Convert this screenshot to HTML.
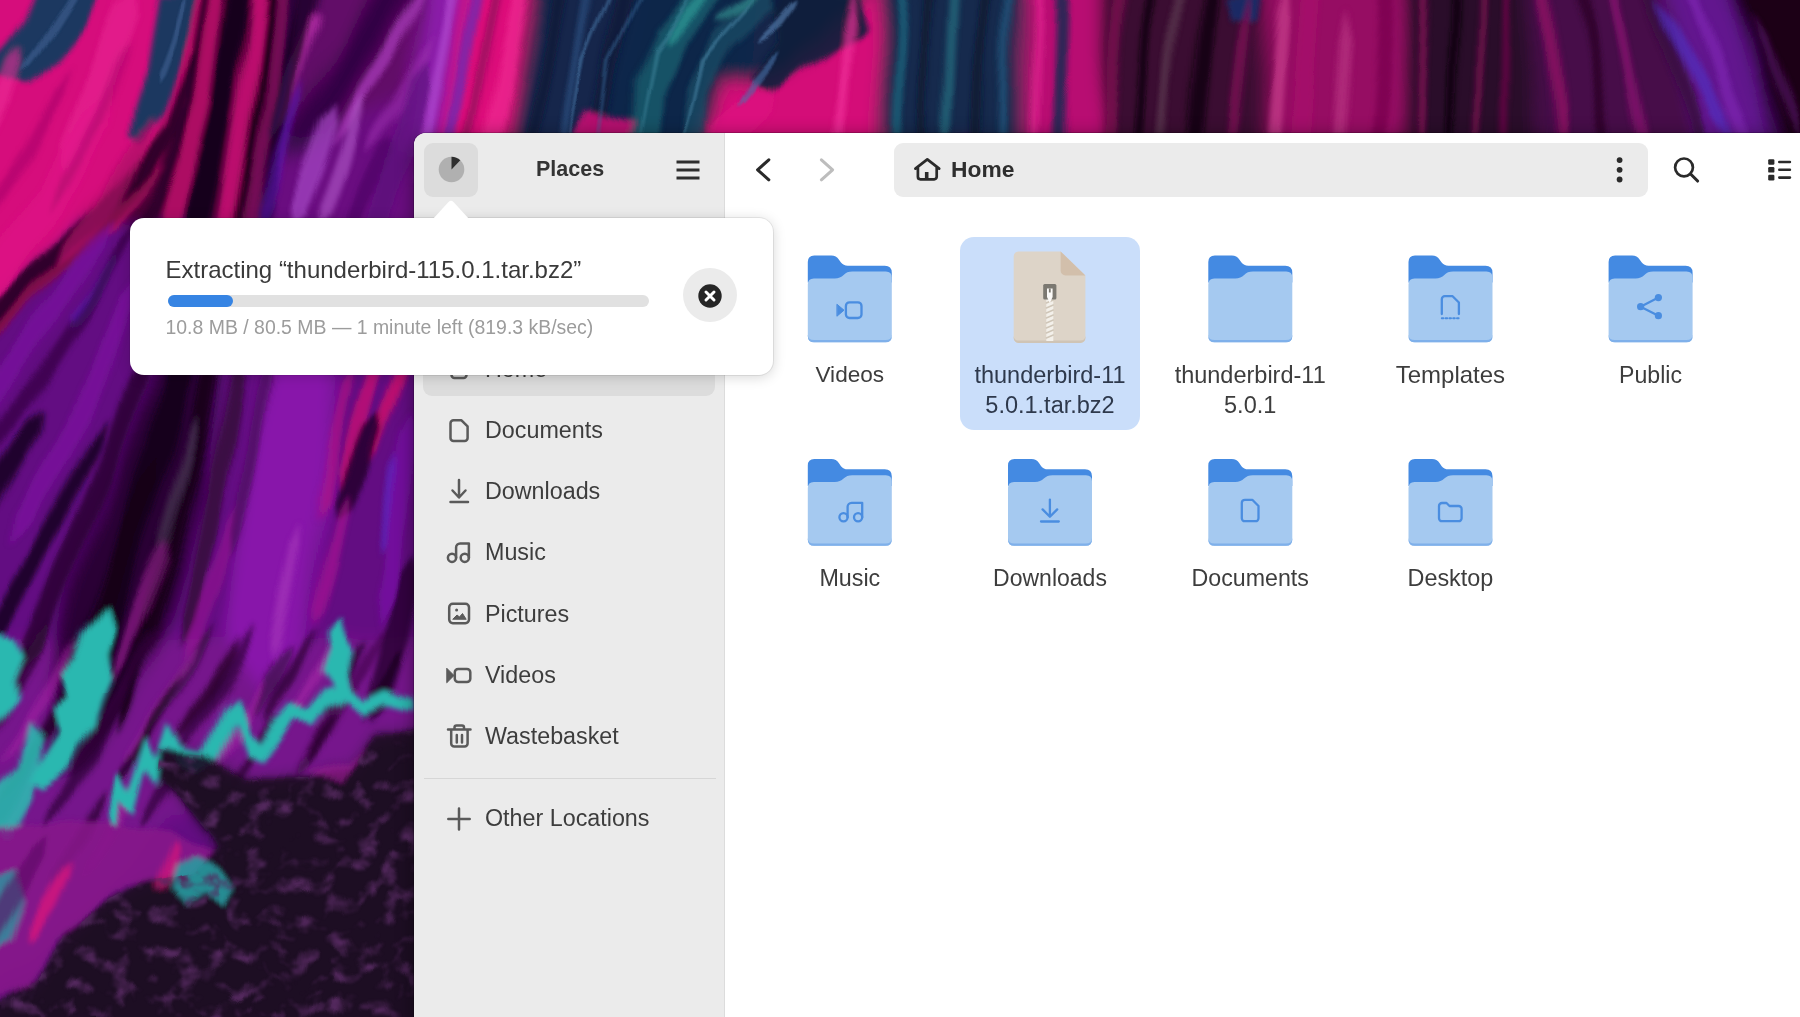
<!DOCTYPE html>
<html>
<head>
<meta charset="utf-8">
<title>Files</title>
<style>
html,body{margin:0;padding:0;}
body{width:1800px;height:1017px;overflow:hidden;position:relative;background:#5a0f6e;font-family:"Liberation Sans",sans-serif;color:#3a3a3a;}
.abs{position:absolute;}
#wall{position:absolute;left:0;top:0;width:1800px;height:1017px;}
#win{position:absolute;left:414px;top:133px;width:1400px;height:900px;border-top-left-radius:12px;overflow:hidden;background:#fff;box-shadow:0 0 0 1px rgba(0,0,0,.18),0 3px 18px rgba(0,0,0,.45);}
#side{position:absolute;left:0;top:0;width:310px;height:900px;background:#ebebeb;border-right:1px solid #dcdcdc;}
.t{position:absolute;white-space:nowrap;line-height:1;}
.sb{font-size:23.3px;color:#3d3d3d;left:71px;margin-top:1px;}
.ic{position:absolute;}
.lbl{position:absolute;margin-top:0.5px;width:200px;text-align:center;font-size:23px;line-height:30.7px;color:#3d3d3d;}
.folder{position:absolute;width:86px;height:88px;}
</style>
</head>
<body>
<!--WALL-->
<svg id="wall" width="1800" height="1017" viewBox="0 0 1800 1017">
<defs><filter id="b1" x="-5%" y="-5%" width="110%" height="110%"><feGaussianBlur stdDeviation="8"/></filter><filter id="b2" x="-5%" y="-5%" width="110%" height="110%"><feGaussianBlur stdDeviation="2.4"/></filter><filter id="b3" x="-5%" y="-5%" width="110%" height="110%"><feGaussianBlur stdDeviation="1.2"/></filter>
<filter id="warp" x="0" y="0" width="100%" height="100%" color-interpolation-filters="sRGB"><feTurbulence type="fractalNoise" baseFrequency="0.016 0.006" numOctaves="2" seed="4" result="n"/><feDisplacementMap in="SourceGraphic" in2="n" scale="22" xChannelSelector="R" yChannelSelector="G"/><feGaussianBlur stdDeviation="0.7"/></filter>
<filter id="bumpf" x="0" y="0" width="100%" height="100%" color-interpolation-filters="sRGB"><feTurbulence type="fractalNoise" baseFrequency="0.045 0.055" numOctaves="3" seed="11" result="n"/><feColorMatrix in="n" type="matrix" values="0 0 0 0 0.33  0 0 0 0 0.16  0 0 0 0 0.37  3.4 0 0 0 -1.75"/><feGaussianBlur stdDeviation="0.9"/></filter>
<clipPath id="dk"><polygon points="425,732 379,732 351,767 303,781 241,781 207,756 165,750 162,781 193,812 220,846 193,874 138,887 103,908 69,929 34,977 -10,1008 -10,1030 425,1030"/></clipPath></defs>
<rect width="1800" height="1017" fill="#6c1088"/>
<g filter="url(#warp)"><g filter="url(#b1)"><polygon points="-30,-30 450,-30 450,1050 -30,1050" fill="#640e82"/>
<polygon points="-30,640 450,640 450,760 240,800 170,820 100,905 -30,1000" fill="#76128c"/>
<polygon points="-30,-30 200,-30 186,60 160,134 125,182 84,218 40,264 -30,330" fill="#d60c7c"/>
<polygon points="200,-30 292,-30 278,134 252,225 130,225 84,218 125,182 160,134 186,60" fill="#4a0636"/>
<polygon points="292,-30 450,-30 450,230 252,225 278,134" fill="#6a0e80"/>
<polygon points="292,-30 450,-30 450,60 380,110 300,140 278,134" fill="#620868"/>
<polygon points="417,-48 385,-29 337,50 287,132 282,168 313,148 367,70 415,-11" fill="#2c0640" opacity="0.85"/>
<polygon points="194,332 151,362 114,467 70,583 48,686 42,752 51,781 78,768 122,714 170,617 206,493 219,378" fill="#2a0634"/>
<polygon points="305,324 265,366 245,495 225,634 258,689 305,646 325,505 335,374" fill="#8814aa"/>
<polygon points="425,732 379,732 351,767 303,781 241,781 207,756 165,750 162,781 193,812 220,846 193,874 138,887 103,908 69,929 34,977 -10,1008 -10,1030 425,1030" fill="#1e0c22"/>
<polygon points="430,-30 470,-30 440,150 400,150" fill="#8a1ea8"/>
<polygon points="470,-30 535,-30 505,150 440,150" fill="#dc0c7a"/>
<polygon points="535,-30 640,-30 600,150 505,150" fill="#14264c"/>
<polygon points="640,-30 760,-30 740,150 600,150" fill="#10284a"/>
<polygon points="760,-30 890,-30 890,150 740,150" fill="#13284a"/>
<polygon points="720,85 790,75 830,35 885,-30 890,150 700,150" fill="#d40c78"/>
<polygon points="880,-30 1025,-30 1025,150 880,150" fill="#142c4e"/>
<polygon points="1025,-30 1100,-30 1100,150 1025,150" fill="#b80c72"/>
<polygon points="1100,-30 1265,-30 1265,150 1100,150" fill="#3a0a30"/>
<polygon points="1265,-30 1405,-30 1400,150 1265,150" fill="#960a64"/>
<polygon points="1405,-30 1530,-30 1540,150 1400,150" fill="#2c0a2a"/>
<polygon points="1530,-30 1660,-30 1700,150 1540,150" fill="#460a48"/>
<polygon points="1660,-30 1722,-30 1775,150 1700,150" fill="#62188e"/>
<polygon points="1722,-30 1830,-30 1830,150 1775,150" fill="#1a0418"/></g>
<g filter="url(#b2)"><polygon points="249,-62 235,-21 216,98 188,214 163,373 170,431 193,377 214,218 236,102 251,-19" fill="#14041a"/>
<polygon points="267,-62 255,-21 240,99 221,215 221,257 235,217 254,101 269,-19" fill="#c80c74" opacity="0.9"/>
<polygon points="280,-62 270,-21 254,99 235,215 234,257 245,217 262,101 278,-19" fill="#14041a" opacity="0.9"/>
<polygon points="290,-66 279,-21 264,109 243,215 243,253 257,217 276,111 291,-19" fill="#7a0a58" opacity="0.85"/>
<polygon points="301,-66 291,-21 276,109 255,215 255,253 269,217 288,111 301,-19" fill="#2a0636" opacity="0.9"/>
<polygon points="228,-62 215,-21 197,98 161,213 160,257 183,219 213,102 229,-19" fill="#b80a68" opacity="0.9"/>
<polygon points="218,-62 207,-21 188,99 152,198 135,227 134,240 145,233 164,202 196,101 215,-19" fill="#30042a" opacity="0.95"/>
<polygon points="210,-62 199,-21 177,99 134,187 107,221 102,237 117,229 146,193 187,101 207,-19" fill="#c00a6c" opacity="0.8"/>
<polygon points="205,36 192,59 164,127 119,183 83,217 36,263 -35,328 -50,361 -15,348 54,281 101,235 137,197 176,133 200,61" fill="#2c0428" opacity="0.95"/>
<polygon points="164,165 147,177 106,218 57,266 -3,324 -21,348 3,332 63,274 114,226 153,183" fill="#8a0850" opacity="0.9"/>
<polygon points="40,-8 102,-8 84,30 58,62 30,82 6,76 -8,66 12,44 28,22" fill="#1c3760"/>
<polygon points="156,-8 199,-8 191,35 178,70 160,116 136,145 126,138 131,110 144,70 150,30" fill="#1c3760"/>
<polygon points="134,-14 115,6 88,75 60,145 62,174 84,155 112,85 135,14" fill="#ee2c98" opacity="0.5"/>
<polygon points="23,46 12,58 -2,98 -14,128 -13,140 -2,132 12,102 24,62" fill="#ee2c98" opacity="0.6"/>
<polygon points="150,119 134,137 102,195 64,245 56,268 76,255 118,205 146,143" fill="#b00a68" opacity="0.7"/>
<polygon points="111,92 82,113 36,191 -24,270 -31,308 4,290 64,209 108,127" fill="#e2148a" opacity="0.5"/>
<polygon points="70,69 56,88 25,147 -15,207 -24,231 -5,213 35,153 64,92" fill="#a80a6a" opacity="0.6"/>
<polygon points="128,39 116,59 93,118 56,188 47,214 64,192 103,122 124,61" fill="#a80a6a" opacity="0.5"/>
<polygon points="318,11 308,25 290,68 275,118 274,138 285,122 302,72 316,27" fill="#c432b4" opacity="0.9"/>
<polygon points="294,58 287,69 276,104 269,134 269,146 275,136 284,106 293,71" fill="#7a2ce0" opacity="0.7"/>
<polygon points="430,-28 414,-7 379,57 341,119 331,144 349,125 391,63 422,-3" fill="#a43ab4" opacity="0.8"/>
<polygon points="434,32 421,48 395,97 368,137 362,154 376,143 405,103 429,52" fill="#9a2cac" opacity="0.6"/>
<polygon points="334,102 320,118 303,167 288,212 290,231 304,218 321,173 336,122" fill="#a648c6" opacity="0.7"/>
<polygon points="362,98 351,113 333,163 318,210 318,228 330,214 347,167 361,117" fill="#b45ccc" opacity="0.6"/>
<polygon points="304,79 294,99 275,159 257,213 256,234 267,217 285,161 302,101" fill="#5a14c4" opacity="0.5"/>
<polygon points="390,138 377,147 360,181 345,217 346,232 359,223 376,189 391,153" fill="#4a0a60" opacity="0.6"/>
<polygon points="318,-44 304,-22 287,48 269,128 269,158 283,132 305,52 320,-18" fill="#1c0424" opacity="0.8"/>
<polygon points="427,56 410,77 389,147 370,217 373,244 390,223 411,153 430,83" fill="#58107a" opacity="0.6"/>
<polygon points="118,252 108,260 91,287 72,315 69,328 80,321 101,293 116,264" fill="#5a22d4" opacity="0.7"/>
<polygon points="114,219 94,236 53,295 2,364 -29,415 -30,438 -11,425 18,376 67,305 106,244" fill="#7a12a0" opacity="0.7"/>
<polygon points="139,216 121,238 80,307 34,376 -16,446 -28,474 -4,454 46,384 90,313 129,242" fill="#3a0848" opacity="0.8"/>
<polygon points="138,276 122,297 92,366 51,445 11,515 6,544 29,525 69,455 108,374 134,303" fill="#7e14a0" opacity="0.7"/>
<polygon points="40,412 23,426 -8,475 -38,525 -40,548 -22,535 8,485 37,434" fill="#14041a" opacity="0.8"/>
<polygon points="109,412 90,437 48,516 2,596 -28,645 -30,668 -12,655 18,604 62,524 100,443" fill="#14041a" opacity="0.8"/>
<polygon points="147,345 127,377 91,476 50,576 20,646 20,674 40,654 70,584 109,484 143,383" fill="#2a0634" opacity="0.85"/>
<polygon points="184,349 165,372 146,446 116,535 88,636 67,728 66,762 83,732 112,644 144,545 174,454 191,378" fill="#14041a"/>
<polygon points="217,348 205,371 189,438 167,518 142,608 122,699 120,732 134,701 158,612 185,522 207,442 219,373" fill="#14041a" opacity="0.9"/>
<polygon points="160,452 143,478 112,557 77,647 73,682 93,653 128,563 157,482" fill="#14041a" opacity="0.85"/>
<polygon points="200,412 191,429 177,479 161,539 159,561 169,541 187,481 199,431" fill="#5a3a66" opacity="0.6"/>
<polygon points="241,345 230,371 214,449 196,538 179,618 180,648 193,622 212,542 230,451 242,373" fill="#36083f" opacity="0.9"/>
<polygon points="167,542 155,558 134,607 113,658 110,678 123,662 146,613 165,562" fill="#a01c98" opacity="0.6"/>
<polygon points="238,499 226,518 206,577 185,638 184,661 199,642 222,583 238,522" fill="#9a1894" opacity="0.55"/>
<polygon points="266,349 256,374 243,449 230,529 231,558 242,531 257,451 268,376" fill="#4a0a5c" opacity="0.7"/>
<polygon points="377,355 365,370 350,418 336,468 336,488 348,472 366,422 379,374" fill="#c40c74" opacity="0.8"/>
<polygon points="404,356 395,369 382,408 369,450 369,467 379,454 394,412 405,371" fill="#d0106c" opacity="0.8"/>
<polygon points="350,366 340,384 326,439 317,499 318,521 327,501 338,441 350,386" fill="#b81484" opacity="0.6"/>
<polygon points="378,416 362,426 344,465 331,501 334,517 349,509 368,475 382,434" fill="#260630" opacity="0.85"/>
<polygon points="412,412 400,439 388,519 374,598 379,628 394,602 408,521 416,441" fill="#7612a2" opacity="0.8"/>
<polygon points="397,456 391,469 383,509 376,544 377,557 384,546 393,511 399,471" fill="#5a28d0" opacity="0.5"/>
<polygon points="346,492 337,509 324,559 313,609 314,628 323,611 336,561 347,511" fill="#b01494" opacity="0.6"/>
<polygon points="417,559 400,577 384,636 368,696 374,721 392,704 412,644 424,583" fill="#280630" opacity="0.8"/>
<polygon points="304,522 296,539 285,589 276,639 276,658 284,641 295,591 304,541" fill="#b040c0" opacity="0.5"/>
<polygon points="53,617 35,637 -4,700 -43,767 -53,793 -33,773 11,710 45,643" fill="#300838" opacity="0.8"/>
<polygon points="162,619 146,638 110,696 74,757 65,781 82,763 123,704 154,642" fill="#300838" opacity="0.8"/>
<polygon points="214,624 201,638 174,681 147,728 141,746 155,732 186,689 209,642" fill="#3c0a48" opacity="0.8"/>
<polygon points="296,640 286,648 267,676 250,708 247,720 258,712 279,684 294,652" fill="#3c0a48" opacity="0.7"/>
<polygon points="260,622 247,638 217,687 187,738 179,758 193,742 227,693 253,642" fill="#2a0632" opacity="0.7"/>
<polygon points="347,688 336,698 314,731 294,768 290,782 302,772 326,739 344,702" fill="#3a0a44" opacity="0.7"/>
<polygon points="131,681 116,698 83,751 50,808 42,829 58,812 95,759 124,702" fill="#2a0632" opacity="0.7"/>
<polygon points="40,742 26,758 -5,806 -34,857 -41,878 -26,863 9,814 34,762" fill="#3c0a48" opacity="0.7"/>
<polygon points="386,630 377,638 358,667 341,698 337,710 347,702 368,673 383,642" fill="#3a0a44" opacity="0.6"/>
<polygon points="191,750 182,758 163,787 146,818 142,830 152,822 173,793 188,762" fill="#2a0632" opacity="0.7"/>
<polygon points="80,632 67,648 37,697 7,748 -1,768 13,752 47,703 73,652" fill="#a420a4" opacity="0.6"/>
<polygon points="199,644 187,659 161,702 133,748 126,766 139,752 169,708 193,661" fill="#b02ab0" opacity="0.5"/>
<polygon points="267,678 257,689 236,722 215,758 210,772 221,762 245,728 263,691" fill="#a822a8" opacity="0.5"/>
<polygon points="336,640 327,649 309,677 291,708 287,720 297,712 317,683 333,651" fill="#b428b0" opacity="0.5"/>
<polygon points="148,766 137,778 112,817 89,858 83,874 95,862 123,823 143,782" fill="#a01c9a" opacity="0.6"/>
<polygon points="104,634 92,649 66,692 38,738 31,756 44,742 74,698 98,651" fill="#1c0622" opacity="0.8"/>
<polygon points="184,674 172,689 146,732 118,778 111,796 124,782 154,738 178,691" fill="#1c0622" opacity="0.8"/>
<polygon points="243,636 232,649 208,687 184,728 178,744 190,732 217,693 238,651" fill="#240628" opacity="0.8"/>
<polygon points="317,628 307,639 286,672 265,708 260,722 271,712 295,678 313,641" fill="#240628" opacity="0.7"/>
<polygon points="366,640 357,648 338,677 321,708 317,720 327,712 348,683 363,652" fill="#1c0622" opacity="0.7"/>
<polygon points="69,684 57,698 30,742 3,788 -4,806 9,792 40,748 63,702" fill="#240628" opacity="0.7"/>
<polygon points="405,651 397,658 381,682 367,708 364,719 373,712 391,688 403,662" fill="#1c0622" opacity="0.8"/>
<polygon points="276,710 267,719 249,747 231,778 227,790 237,782 257,753 273,721" fill="#240628" opacity="0.7"/>
<polygon points="28,646 17,659 -7,697 -31,738 -37,754 -25,742 2,703 23,661" fill="#1c0622" opacity="0.7"/>
<polygon points="146,630 138,639 120,668 102,699 97,710 106,701 127,672 142,641" fill="#1c0622" opacity="0.7"/>
<polygon points="334,713 327,719 315,737 303,758 302,767 309,762 323,743 333,721" fill="#240628" opacity="0.7"/>
<polygon points="107,788 97,798 75,832 55,868 50,882 61,872 86,838 103,802" fill="#240628" opacity="0.7"/>
<polygon points="104,606 112,630 104,652 110,676 100,700 94,724 76,746 64,770 42,792 26,784 40,760 54,738 48,716 64,700 60,676 76,652 84,626 96,616" fill="#2bb8b0"/>
<polygon points="-8,630 12,640 22,660 12,684 16,706 -8,726" fill="#2bb8b0"/>
<polygon points="24,730 38,745 30,800 8,840 -8,830 -8,790 14,770" fill="#2bb8b0" opacity="0.9"/>
<polygon points="338,618 344,640 352,652 346,676 350,692 336,706 330,686 320,672 328,650 326,634" fill="#2bb8b0"/>
<polygon points="108,815 120,770 132,790 150,735 160,760 172,722 186,748 204,752 222,712 236,700 246,735 258,745 272,720 290,700 305,712 322,690 345,686 365,700 385,690 416,700 416,712 385,704 365,714 345,700 325,708 308,730 292,718 278,740 260,765 244,756 232,724 218,760 200,772 184,768 172,748 160,790 148,770 136,815 122,800 114,835" fill="#2bb8b0"/>
<polygon points="425,732 379,732 351,767 303,781 241,781 207,756 165,750 162,781 193,812 220,846 193,874 138,887 103,908 69,929 34,977 -10,1008 -10,1030 425,1030" fill="#1e0c22" opacity="0.9"/>
<polygon points="-30,830 90,820 170,835 215,850 190,875 130,888 95,910 60,935 25,985 -30,1010" fill="#86168a" opacity="0.9"/>
<polygon points="300,775 350,762 372,742 340,782" fill="#9a1a94" opacity="0.7"/>
<polygon points="172,868 196,856 222,868 238,884 226,903 205,892 186,905 170,890" fill="#2a9aa0" opacity="0.9"/>
<polygon points="-8,880 14,870 24,900 10,940 -8,950" fill="#2a9aa0" opacity="0.8"/>
<polygon points="72,860 62,868 44,897 28,927 26,940 36,933 56,903 70,872" fill="#d8187c" opacity="0.8"/>
<polygon points="177,843 171,849 163,868 156,886 157,894 164,890 173,872 179,851" fill="#d8187c" opacity="0.7"/>
<polygon points="50,832 33,846 1,895 -28,945 -30,968 -12,955 19,905 47,854" fill="#5a0e62" opacity="0.6"/>
<polygon points="466,-54 450,-6 419,134 414,184 431,136 460,-4" fill="#b04ad0" opacity="0.7"/>
<polygon points="487,-54 473,-6 446,134 443,184 458,136 483,-4" fill="#5030c0" opacity="0.6"/>
<polygon points="530,-54 513,-6 484,133 482,184 500,137 527,-4" fill="#f02a92" opacity="0.7"/>
<polygon points="506,-54 493,-6 466,134 461,184 474,136 501,-4" fill="#8a0a58" opacity="0.7"/>
<polygon points="570,-54 554,-6 524,134 520,184 536,136 566,-4" fill="#0e1a38" opacity="0.8"/>
<polygon points="598,-54 585,-6 561,134 558,184 571,136 595,-4" fill="#2a4c7c" opacity="0.7"/>
<polygon points="634,-54 618,-6 591,134 589,184 605,136 632,-4" fill="#0e1a38" opacity="0.8"/>
<polygon points="727,-29 701,-22 655,27 632,85 629,141 641,161 655,143 660,91 681,45 723,-2" fill="#1a566a" opacity="0.9"/>
<polygon points="790,-11 766,-6 713,32 683,87 682,142 691,160 702,142 705,93 731,48 778,10" fill="#1b4a64" opacity="0.8"/>
<polygon points="713,-13 703,-9 682,10 665,33 662,44 671,39 690,18 709,-3" fill="#2f9c98" opacity="0.7"/>
<polygon points="766,-10 758,-9 739,2 720,15 715,22 724,21 745,10 762,-3" fill="#3aa8a0" opacity="0.6"/>
<polygon points="772,-8 856,-8 866,28 815,62 772,92 748,78 776,44" fill="#0c1c3c" opacity="0.9"/>
<polygon points="590,112 632,125 628,140 575,140" fill="#c80c74" opacity="0.9"/>
<polygon points="852,-20 843,20 833,135 834,175 843,135 853,20" fill="#f03098" opacity="0.7"/>
<polygon points="774,88 750,89 710,124 706,147 730,146 770,111" fill="#e01482" opacity="0.6"/>
<polygon points="907,-54 900,-5 893,135 896,184 903,135 910,-5" fill="#1f6a80" opacity="0.7"/>
<polygon points="932,-54 926,-5 920,135 922,184 928,135 934,-5" fill="#0c1630" opacity="0.8"/>
<polygon points="957,-54 950,-5 943,135 946,184 953,135 960,-5" fill="#2a7a8a" opacity="0.6"/>
<polygon points="987,-54 980,-5 975,135 978,184 985,135 990,-5" fill="#0c1630" opacity="0.8"/>
<polygon points="1009,-54 1004,-5 1000,135 1003,184 1008,135 1012,-5" fill="#245a80" opacity="0.7"/>
<polygon points="1063,-54 1056,-5 1052,135 1057,184 1064,135 1068,-5" fill="#142c50" opacity="0.8"/>
<polygon points="1042,-54 1036,-5 1030,135 1032,184 1038,135 1044,-5" fill="#ea2a94" opacity="0.6"/>
<polygon points="1124,-54 1114,-6 1102,134 1104,184 1114,136 1126,-4" fill="#7a0a50" opacity="0.8"/>
<polygon points="1154,-54 1145,-5 1133,135 1134,184 1143,135 1155,-5" fill="#120412" opacity="0.8"/>
<polygon points="1185,-54 1175,-6 1160,134 1160,184 1170,136 1185,-4" fill="#6a5060" opacity="0.45"/>
<polygon points="1215,-54 1203,-6 1189,134 1191,184 1203,136 1217,-4" fill="#120412" opacity="0.8"/>
<polygon points="1225,-5 1262,-5 1258,22 1232,18" fill="#1a2c6a" opacity="0.9"/>
<polygon points="1250,-7 1240,29 1227,134 1227,172 1237,136 1250,31" fill="#7a0a54" opacity="0.8"/>
<polygon points="1286,-20 1276,19 1265,134 1268,175 1279,136 1288,21" fill="#c8408c" opacity="0.7"/>
<polygon points="1347,7 1340,40 1333,135 1336,168 1343,135 1350,40" fill="#c03a88" opacity="0.6"/>
<polygon points="1314,-54 1300,-6 1290,134 1296,184 1310,136 1320,-4" fill="#a60c6c" opacity="0.8"/>
<polygon points="1388,-54 1378,-5 1369,135 1373,184 1383,135 1392,-5" fill="#7a0850" opacity="0.8"/>
<polygon points="1427,-54 1421,-5 1414,135 1416,184 1422,135 1429,-5" fill="#8a0c58" opacity="0.7"/>
<polygon points="1457,-54 1451,-5 1446,135 1448,184 1454,135 1459,-5" fill="#120412" opacity="0.9"/>
<polygon points="1481,-54 1476,-5 1472,135 1475,184 1480,135 1484,-5" fill="#8a0c58" opacity="0.6"/>
<polygon points="1509,-54 1504,-5 1502,135 1505,184 1510,135 1512,-5" fill="#7a0a50" opacity="0.6"/>
<polygon points="1540,-54 1540,-4 1555,136 1565,184 1565,134 1550,-6" fill="#9a0c6a" opacity="0.7"/>
<polygon points="1572,-54 1575,-4 1599,136 1612,184 1609,134 1585,-6" fill="#2a0828" opacity="0.8"/>
<polygon points="1602,-54 1607,-4 1635,136 1650,184 1645,134 1617,-6" fill="#9a107a" opacity="0.6"/>
<polygon points="1632,-54 1644,-3 1694,137 1718,184 1706,133 1656,-7" fill="#3a0a40" opacity="0.8"/>
<polygon points="1657,2 1667,33 1710,113 1731,138 1722,107 1677,27" fill="#5034c8" opacity="0.6"/>
<polygon points="1674,-54 1687,-3 1736,137 1760,184 1748,133 1697,-7" fill="#8a2cc0" opacity="0.5"/>
<polygon points="1750,12 1756,41 1786,121 1800,148 1794,119 1764,39" fill="#5a1470" opacity="0.6"/></g>
<g filter="url(#b3)"><polygon points="80,-12 69,-2 47,33 28,60 23,71 32,64 53,37 75,2" fill="#3a5c8c" opacity="0.7"/>
<polygon points="186,-7 179,4 169,39 157,71 156,83 163,73 175,41 185,6" fill="#3a5c8c" opacity="0.7"/>
<polygon points="621,-28 611,-6 584,60 572,138 568,165 574,138 588,60 613,-4" fill="#4a78a8" opacity="0.6"/>
<polygon points="650,-28 639,-6 608,60 599,138 596,165 601,138 612,60 641,-4" fill="#3a6a98" opacity="0.5"/>
<polygon points="757,-3 741,13 698,61 681,138 676,165 683,138 702,63 743,15" fill="#4a86a8" opacity="0.55"/>
<polygon points="703,-24 689,-6 650,49 635,138 630,169 637,138 654,51 691,-4" fill="#3f8aa0" opacity="0.5"/>
<polygon points="797,2 790,6 775,24 761,38 756,45 763,42 781,28 794,10" fill="#5a86b8" opacity="0.6"/>
<polygon points="776,53 768,58 751,78 738,99 735,107 742,101 757,82 772,62" fill="#4a70a8" opacity="0.6"/></g>
<g clip-path="url(#dk)"><rect x="0" y="700" width="420" height="320" fill="#000" filter="url(#bumpf)"/></g>
</g>
</svg>
<!--/WALL-->

<div id="win">
  <div id="side">
    <!-- progress button -->
    <div class="abs" style="left:10px;top:10px;width:54px;height:54px;border-radius:9px;background:#dcdcdc;"></div>
    <svg class="ic" style="left:24px;top:23px" width="27" height="27" viewBox="0 0 27 27"><circle cx="13.5" cy="13.5" r="12.8" fill="#b0b0b0"/><path d="M13.5 13.5 L13.5 0.7 A12.8 12.8 0 0 1 22.3 4.2 Z" fill="#2e2e2e"/></svg>
    <div class="t" style="left:122px;top:25.5px;font-size:21.5px;font-weight:bold;color:#333;">Places</div>
    <svg class="ic" style="left:262px;top:27px" width="24" height="20" viewBox="0 0 24 20"><path d="M0.5 2h23M0.5 10h23M0.5 18h23" stroke="#2e2e2e" stroke-width="2.8" fill="none"/></svg>

    <!-- selected Home row -->
    <div class="abs" style="left:9px;top:209px;width:292px;height:54px;border-radius:9px;background:#dcdcdc;"></div>

    <div class="t sb" style="top:223.7px">Home</div>
    <div class="t sb" style="top:285px">Documents</div>
    <div class="t sb" style="top:346px">Downloads</div>
    <div class="t sb" style="top:407px">Music</div>
    <div class="t sb" style="top:469px">Pictures</div>
    <div class="t sb" style="top:530px">Videos</div>
    <div class="t sb" style="top:591px">Wastebasket</div>
    <div class="abs" style="left:10px;top:645px;width:292px;height:1px;background:#d6d6d6;"></div>
    <div class="t sb" style="top:673px">Other Locations</div>
    <!--SIDEICONS-->
  </div>

  <!-- main header -->
  <!--HEADER-->
  <div class="abs" style="left:480px;top:10px;width:754px;height:54px;border-radius:9px;background:#ebebeb;"></div>
  <div class="t" style="left:537px;top:24.5px;font-size:22.8px;font-weight:bold;color:#2e2e2e;">Home</div>

  <!-- grid -->
  <div class="abs" style="left:545.8px;top:103.8px;width:180.4px;height:192.8px;border-radius:14px;background:#cadefa;"></div>
  <div class="lbl" style="left:335.8px;top:226.2px;font-size:22.6px;">Videos</div>
  <div class="lbl" style="left:536.0px;top:226.2px;color:#2e394c;font-size:23.5px;">thunderbird-11<br>5.0.1.tar.bz2</div>
  <div class="lbl" style="left:736.2px;top:226.2px;font-size:23.5px;">thunderbird-11<br>5.0.1</div>
  <div class="lbl" style="left:936.4px;top:226.2px;font-size:24.0px;">Templates</div>
  <div class="lbl" style="left:1136.5px;top:226.2px;font-size:23.1px;">Public</div>
  <div class="lbl" style="left:335.8px;top:429.4px;font-size:23.3px;">Music</div>
  <div class="lbl" style="left:536.0px;top:429.4px;font-size:23.0px;">Downloads</div>
  <div class="lbl" style="left:736.2px;top:429.4px;font-size:23.2px;">Documents</div>
  <div class="lbl" style="left:936.4px;top:429.4px;font-size:23.4px;">Desktop</div>
  
</div>


<svg id="ov" class="abs" style="left:0;top:0;pointer-events:none" width="1800" height="1017" viewBox="0 0 1800 1017" fill="none" stroke="#5a5a5a" stroke-width="2.5" stroke-linecap="round" stroke-linejoin="round">
  <!-- home (sidebar, mostly hidden by popover) -->
  <path d="M449 368 L459 359 L469 368 M451.5 366.5 V375 a3 3 0 0 0 3 3 H463.5 a3 3 0 0 0 3 -3 V366.5"/>
  <!-- documents -->
  <path d="M453.5 420.3 H461.5 L467.6 426.4 V438 a3 3 0 0 1 -3 3 H453.5 a3 3 0 0 1 -3 -3 V423.3 a3 3 0 0 1 3 -3 Z"/>
  <!-- downloads -->
  <path d="M459 480 V497 M452.5 490.5 L459 497.5 L465.5 490.5 M450.5 502 H468"/>
  <!-- music -->
  <circle cx="452" cy="557.8" r="4.1"/><circle cx="464.8" cy="557.8" r="4.1"/>
  <path d="M456.1 557.8 V547.5 a4 4 0 0 1 4 -4 H468.9 V557.8"/>
  <!-- pictures -->
  <rect x="449.2" y="603.8" width="19.8" height="19.4" rx="3.6"/>
  <circle cx="456.6" cy="610" r="1.5" fill="#5a5a5a" stroke="none"/>
  <path d="M453 619 L457 615 L459.5 617 L462.5 613.5 L466 619 Z" fill="#5a5a5a" stroke-width="1"/>
  <!-- videos -->
  <rect x="454.8" y="668.9" width="15.5" height="13.2" rx="3.4"/>
  <path d="M447 668.5 L454 675.5 L447 682.5 Z" fill="#5a5a5a" stroke-width="1"/>
  <!-- trash -->
  <path d="M448 729.5 H470.5 M454.5 729 V727.5 a2 2 0 0 1 2 -2 H462 a2 2 0 0 1 2 2 V729 M451.2 730 V743.6 a3 3 0 0 0 3 3 H464.6 a3 3 0 0 0 3 -3 V730 M456.8 735 V742.5 M462 735 V742.5"/>

  <defs>
    <g id="fold" stroke="none">
      <path d="M0 6.5 Q0 0 6.5 0 H23.5 Q28.5 0 31 4 L33.2 7.2 Q35.4 10.3 40 10.3 H77 Q84 10.3 84 17.3 V27 H0 Z" fill="#448ae2"/>
      <path d="M0 29 Q0 23 6 23 H27 Q32.5 23 35.8 19.6 Q39 16.2 44.5 16.2 H78 Q84 16.2 84 22.2 V80.5 Q84 86.8 77.7 86.8 H6.3 Q0 86.8 0 80.5 Z" fill="#a5c9f0"/>
      <path d="M0 79 V80.5 Q0 86.8 6.3 86.8 H77.7 Q84 86.8 84 80.5 V79 Q84 84.6 77.7 84.6 H6.3 Q0 84.6 0 79 Z" fill="#7fb0ea"/>
    </g>
  </defs>
  <!-- header icons -->
  <g stroke="#2a2a2a" stroke-width="3.1" stroke-linecap="round" stroke-linejoin="round">
    <path d="M768.8 159.8 L757.6 169.8 L768.8 179.8"/>
    <path d="M821.4 159.8 L832.6 169.8 L821.4 179.8" stroke="#bdbdbd"/>
  </g>
  <g stroke="#2a2a2a" stroke-width="2.7" stroke-linecap="round" stroke-linejoin="round">
    <path d="M915.4 168.6 L927.3 159.4 L939.2 168.6 M917.9 167.5 V176.8 a2.5 2.5 0 0 0 2.5 2.5 H934.2 a2.5 2.5 0 0 0 2.5 -2.5 V167.5"/>
    <path d="M926.7 179 V172" stroke-width="3.6" stroke-linecap="butt"/>
    <circle cx="1684" cy="167.4" r="8.9"/>
    <path d="M1690.6 174 L1697.6 181" stroke-width="3.1"/>
  </g>
  <g fill="#2a2a2a" stroke="none">
    <circle cx="1619.6" cy="160.1" r="2.9"/><circle cx="1619.6" cy="169.8" r="2.9"/><circle cx="1619.6" cy="179.5" r="2.9"/>
    <rect x="1768.2" y="159.2" width="6.2" height="5.6" rx="1.2"/><rect x="1768.2" y="167" width="6.2" height="5.6" rx="1.2"/><rect x="1768.2" y="174.8" width="6.2" height="5.6" rx="1.2"/>
    <rect x="1778" y="160.7" width="13.2" height="2.6" rx="1.3"/><rect x="1778" y="168.5" width="13.2" height="2.6" rx="1.3"/><rect x="1778" y="176.3" width="13.2" height="2.6" rx="1.3"/>
  </g>
  <!-- selection -->
  <!-- folders -->
  <use href="#fold" x="807.8" y="255.4"/><use href="#fold" x="1208.3" y="255.4"/><use href="#fold" x="1408.5" y="255.4"/><use href="#fold" x="1608.6" y="255.4"/>
  <use href="#fold" x="807.8" y="459.0"/><use href="#fold" x="1008.0" y="459.0"/><use href="#fold" x="1208.3" y="459.0"/><use href="#fold" x="1408.5" y="459.0"/>
  <!-- archive -->
  <g stroke="none">
    <path d="M1018.7 251.4 H1060.6 L1085.4 275.4 V338 a5 5 0 0 1 -5 5 H1018.7 a5 5 0 0 1 -5 -5 V256.4 a5 5 0 0 1 5 -5 Z" fill="#ddd4c8"/>
    <path d="M1013.7 336 V338 a5 5 0 0 0 5 5 H1080.4 a5 5 0 0 0 5 -5 V336 a5 5 0 0 1 -5 4.6 H1018.7 a5 5 0 0 1 -5 -4.6Z" fill="#cfc4b5"/>
    <path d="M1060.6 251.4 L1085.4 275.4 H1065.6 a5 5 0 0 1 -5 -5 Z" fill="#d2bfab"/>
    <rect x="1046.3" y="299" width="7" height="42" fill="#f3f0ea"/>
    <path d="M1046.3 303 L1053.3 300 M1046.3 308 L1053.3 305 M1046.3 313 L1053.3 310 M1046.3 318 L1053.3 315 M1046.3 323 L1053.3 320 M1046.3 328 L1053.3 325 M1046.3 333 L1053.3 330 M1046.3 338 L1053.3 335" stroke="#cfc6b8" stroke-width="1.4"/>
    <rect x="1043.2" y="284" width="13.2" height="15.5" rx="1.5" fill="#7b7871"/>
    <path d="M1047 288.5 H1052.6 V297 L1049.8 303 L1047 297 Z" fill="#fbfaf8"/>
    <rect x="1048.9" y="288.5" width="1.8" height="4" fill="#7b7871"/>
  </g>
  <!-- emblems -->
  <g stroke="#4a8de0" stroke-width="2.3" stroke-linecap="round" stroke-linejoin="round" fill="none">
    <!-- videos -->
    <rect x="845.9" y="302.3" width="15.6" height="15.7" rx="3.6"/>
    <path d="M837.2 304.5 L844 310.2 L837.2 316 Z" fill="#4a8de0" stroke-width="1"/>
    <!-- templates -->
    <path d="M1441.8 314 V299.2 a3 3 0 0 1 3 -3 H1452.6 L1458.9 302.5 V314"/>
    <path d="M1441.8 318.3 H1458.9" stroke-dasharray="1.6 2.2" stroke-width="2"/>
    <!-- public -->
    <path d="M1658.4 297.6 L1640.6 306.7 L1658.4 315.7" stroke-width="2.2"/>
    <circle cx="1640.6" cy="306.7" r="3.6" fill="#4a8de0" stroke="none"/><circle cx="1658.4" cy="297.6" r="3.6" fill="#4a8de0" stroke="none"/><circle cx="1658.4" cy="315.7" r="3.6" fill="#4a8de0" stroke="none"/>
    <!-- music -->
    <circle cx="843.5" cy="517.3" r="4.1"/><circle cx="858.1" cy="517.3" r="4.1"/>
    <path d="M847.6 517.3 V506.8 a4 4 0 0 1 4 -4 H862.2 V517.3"/>
    <!-- downloads -->
    <path d="M1049.9 499.6 V516.2 M1042.6 509.4 L1049.9 516.8 L1057.2 509.4 M1041 521.5 H1058.8"/>
    <!-- documents -->
    <path d="M1244.8 499.8 H1252.3 L1258.5 506 V518.2 a3 3 0 0 1 -3 3 H1244.8 a3 3 0 0 1 -3 -3 V502.8 a3 3 0 0 1 3 -3 Z"/>
    <!-- desktop -->
    <path d="M1439 506 a3 3 0 0 1 3 -3 H1446.5 L1449.5 506 H1458.6 a3 3 0 0 1 3 3 V518.2 a3 3 0 0 1 -3 3 H1442 a3 3 0 0 1 -3 -3 Z"/>
  </g>
  <!-- plus -->
  <path d="M459 808.5 V829.5 M448.3 819 H469.7"/>
</svg>

<!-- popover -->

<div class="abs" style="left:130px;top:218px;width:643px;height:156.5px;border-radius:14px;background:#fff;box-shadow:0 0 0 1px rgba(0,0,0,.07),0 2px 13px rgba(0,0,0,.17);"></div>
<svg class="abs" style="left:431px;top:199px" width="40" height="22" viewBox="0 0 40 22"><path d="M1 21 L17.5 3 Q20 0.5 22.5 3 L39 21 Z" fill="#fff"/></svg>
<div class="t" style="left:165.5px;top:257.8px;font-size:24px;color:#3a3a3a;">Extracting “thunderbird-115.0.1.tar.bz2”</div>
<div class="abs" style="left:168px;top:295px;width:481px;height:11.5px;border-radius:6px;background:#e1e1e1;"></div>
<div class="abs" style="left:168px;top:295px;width:65px;height:11.5px;border-radius:6px;background:#3684e3;"></div>
<div class="t" style="left:165.5px;top:317.9px;font-size:19.45px;color:#9c9c9c;">10.8 MB / 80.5 MB — 1 minute left (819.3 kB/sec)</div>
<div class="abs" style="left:682.5px;top:268.4px;width:54px;height:54px;border-radius:27px;background:#ebebeb;"></div>
<svg class="abs" style="left:697.5px;top:283.5px" width="24" height="24" viewBox="0 0 24 24"><circle cx="12" cy="12" r="11.7" fill="#262626"/><path d="M8 8 L16 16 M16 8 L8 16" stroke="#fff" stroke-width="3" stroke-linecap="round"/></svg>

</body>
</html>
